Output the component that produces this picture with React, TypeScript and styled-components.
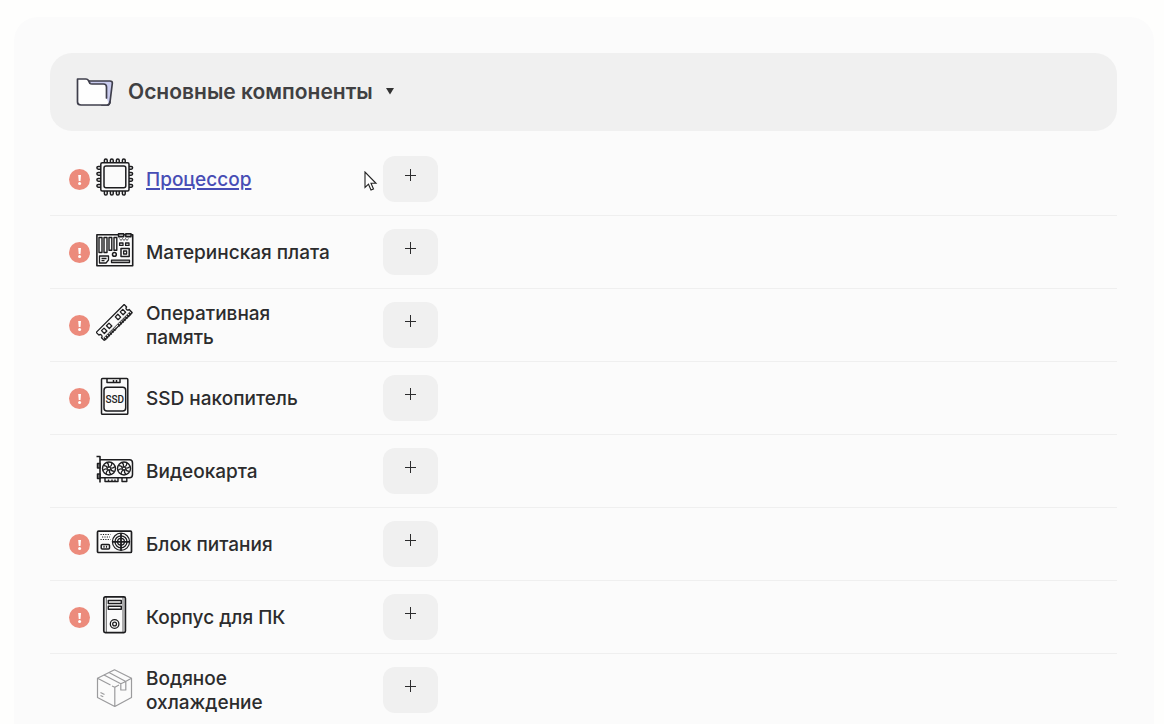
import React from "react";
import styled, { createGlobalStyle } from "styled-components";

const GlobalStyle = createGlobalStyle`
  *, *::before, *::after { box-sizing: border-box; }
  body {
    margin: 0;
    background: #fefefd;
    color: #2c2c2d;
    font-family: Inter, "Noto Sans", sans-serif;
  }
`;

const Page = styled.main`
  padding: 17px 10px 0 14px;
  min-height: 100vh;
  display: flex;
`;

const Card = styled.section`
  flex: 1;
  min-width: 0;
  padding: 36px 37px 36px 36px;
  border-radius: 24px;
  background: #fbfbfb;
`;

const Heading = styled.h2`
  margin: 0 0 12px;
`;

const GroupToggle = styled.button`
  display: flex;
  align-items: center;
  width: 100%;
  height: 78px;
  padding: 0 26px;
  border: 0;
  border-radius: 22px;
  background: #f0f0f0;
  color: #404042;
  font: 600 21px/28px Inter, "Noto Sans", sans-serif;
  text-align: left;
  cursor: pointer;
`;

const GroupTitle = styled.span`
  margin: 0 12px 0 14px;
`;

const List = styled.ul`
  margin: 0;
  padding: 0;
  list-style: none;
`;

const Row = styled.li`
  position: relative;
  display: flex;
  align-items: center;
  height: 73px;
  padding-left: 19px;
  border-bottom: 1px solid #efefef;
`;

const AlertSlot = styled.span`
  flex: none;
  width: 21px;
  height: 21px;
  margin-right: 6px;
  margin-top: 1px;
  svg { display: block; }
`;

const IconSlot = styled.span`
  flex: none;
  width: 38px;
  height: 38px;
  margin-right: 12px;
  margin-bottom: 4px;
  svg { display: block; }
`;

const Label = styled.span`
  flex: none;
  width: 195px;
  margin-right: 42px;
  margin-top: 2px;
  font-size: 19px;
  font-weight: 500;
  line-height: 24px;
`;

const PartLink = styled.a`
  color: #474db5;
  text-decoration: underline;
  text-decoration-thickness: 2px;
  text-underline-offset: 2px;
`;

const AddButton = styled.button`
  flex: none;
  display: flex;
  justify-content: center;
  align-items: center;
  width: 55px;
  height: 46px;
  padding: 0 0 8px;
  border: 0;
  border-radius: 12px;
  background: #f0f0f0;
  color: #2c2c2d;
  cursor: pointer;
`;

const Pointer = styled.svg`
  position: absolute;
  left: 314px;
  top: 28px;
  pointer-events: none;
`;

const IconBase = styled.svg.attrs({ width: 38, height: 38, viewBox: "0 0 38 38", "aria-hidden": true })`
  fill: none;
  stroke: #1d1d1f;
  stroke-width: 1.5;
  stroke-linejoin: round;
`;

const ChipText = styled.text`
  fill: #1d1d1f;
  stroke: none;
  font-family: Roboto, "Liberation Sans", sans-serif;
  font-size: 10px;
  font-weight: 500;
  text-anchor: middle;
`;

const FolderIcon = () => (
  <svg width="38" height="30" viewBox="0 0 38 30" fill="none" stroke="#3f3f4c" strokeWidth="1.7" strokeLinejoin="round" strokeLinecap="round" aria-hidden="true">
    <path d="M12 4H34Q36.600 4 36.300 6.500L34 25Q33.500 28 31 28H26Z" fill="#c9cbee" />
    <path d="M1.500 2H10Q11.500 2 12.500 3.500L14 6.500Q14.500 7 16 7H27.500Q30.500 7 30.500 10V21L33 27Q32 28 30 28H5Q1.500 28 1.500 25Z" fill="#fefefe" stroke="none" />
    <path d="M30.500 21V10Q30.500 7 27.500 7H16Q14.500 7 14 6.500L12.500 3.500Q11.500 2 10 2H1.500V25Q1.500 28 5 28H31Q33.500 28 34 25" />
  </svg>
);

const AlertIcon = () => (
  <svg width="21" height="21" viewBox="0 0 21 21" role="img" aria-label="!">
    <circle cx="10.500" cy="10.500" r="10.500" fill="#ec8b7c" />
    <path d="M9.200 6h2.800l-.5 6h-1.800z" fill="#fff" />
    <circle cx="10.600" cy="14.500" r="1.500" fill="#fff" />
  </svg>
);

const PlusIcon = () => (
  <svg width="12" height="12" viewBox="0 0 12 12" stroke="currentColor" strokeWidth="1" aria-hidden="true">
    <path d="M5.500 0V12M0 6.500H11" />
  </svg>
);

const CpuIcon = () => (
  <IconBase>
    <path d="M8.400 5V2.300a1.400 1.400 0 0 1 2.800 0V5M14.400 5V2.300a1.400 1.400 0 0 1 2.800 0V5M20.400 5V2.300a1.400 1.400 0 0 1 2.800 0V5M26.400 5V2.300a1.400 1.400 0 0 1 2.800 0V5" />
    <path d="M8.400 33v2.700a1.400 1.400 0 0 0 2.800 0V33M14.400 33v2.700a1.400 1.400 0 0 0 2.800 0V33M20.400 33v2.700a1.400 1.400 0 0 0 2.800 0V33M26.400 33v2.700a1.400 1.400 0 0 0 2.800 0V33" />
    <path d="M5 8.400H2.300a1.400 1.400 0 0 0 0 2.800H5M5 14.400H2.300a1.400 1.400 0 0 0 0 2.800H5M5 20.400H2.300a1.400 1.400 0 0 0 0 2.800H5M5 26.400H2.300a1.400 1.400 0 0 0 0 2.800H5" />
    <path d="M33 8.400h2.200a1.400 1.400 0 0 1 0 2.800H33M33 14.400h2.200a1.400 1.400 0 0 1 0 2.800H33M33 20.400h2.200a1.400 1.400 0 0 1 0 2.800H33M33 26.400h2.200a1.400 1.400 0 0 1 0 2.800H33" />
    <rect x="4.800" y="4.800" width="28.200" height="28.200" rx="1.500" />
    <rect x="8" y="8" width="21.800" height="21.800" rx="2" />
  </IconBase>
);

const BoardIcon = () => (
  <IconBase>
    <rect x="0.900" y="3.800" width="35.800" height="31" strokeWidth="1.600" />
    <path d="M3 6.500h3v15H3zM8 6.500h3v15H8zM13 6.500h2.800v12.800H13zM18 6.500h2.800v12.800H18z" strokeWidth="1.400" />
    <rect x="22.500" y="2.700" width="5.200" height="3" fill="#aaa" />
    <rect x="29.800" y="2.700" width="5.200" height="3" fill="#aaa" />
    <path d="M23.500 7.500l1.500 2 1.500-2 1.500 2 1.500-2 1.500 2 1.500-2" strokeWidth="0.700" />
    <rect x="23.600" y="12" width="3.400" height="2.400" strokeWidth="1.300" />
    <rect x="29.600" y="12" width="3.400" height="2.400" strokeWidth="1.300" />
    <rect x="25" y="17.500" width="8.200" height="8" />
    <rect x="27.600" y="20" width="3" height="3" strokeWidth="1.300" />
    <circle cx="18.400" cy="23.400" r="1.900" />
    <path d="M3.500 25h9v4l-2.500 3H3.500zM5.500 27.500h5M5.500 29.700h3" strokeWidth="1.300" />
    <rect x="15.500" y="29.200" width="18" height="2.400" fill="#aaa" strokeWidth="1.300" />
  </IconBase>
);

const RamIcon = () => (
  <IconBase>
    <g transform="rotate(-45 18.800 19)">
      <path d="M-1 12.500H38.500V16a1.800 1.800 0 0 0 0 3.600V23.800H-1V20a1.800 1.800 0 0 0 0-3.600z" strokeWidth="1.300" />
      <path d="M4 15h3.600v4H4zM11 15h3.600v4H11zM23.500 15h3.600v4h-3.600zM30.500 15h3.600v4h-3.600z" strokeWidth="1.300" />
      <path d="M0 21.800H38" strokeWidth="0.800" />
      <path d="M0 23.500H16M19.500 23.500H38" strokeWidth="2.800" strokeDasharray="1.500 1.100" />
    </g>
  </IconBase>
);

const SsdIcon = () => (
  <IconBase>
    <rect x="5.500" y="1.500" width="26.300" height="35.800" rx="1" />
    <path d="M11 1.500v4h13v-4M17.500 5v-2M20.500 5v-2" />
    <rect x="8" y="10.200" width="21.700" height="23.800" rx="3" />
    <ChipText x="18.700" y="25.500">SSD</ChipText>
  </IconBase>
);

const FanBlades = ({ cx, cy }: { cx: number; cy: number }) => (
  <g transform={`translate(${cx} ${cy})`}>
    <circle r="6.500" strokeWidth="1.400" />
    {[0, 45, 90, 135, 180, 225, 270, 315].map((a) => (
      <path key={a} d="M0 -1.500Q3 -2.200 2.800 -5.600" strokeWidth="1.200" transform={`rotate(${a})`} />
    ))}
    <circle r="1.500" strokeWidth="1" />
  </g>
);

const GpuIcon = () => (
  <IconBase>
    <path d="M0.500 6.500H4V32.500" strokeWidth="1.600" />
    <rect x="1.500" y="13.500" width="2.500" height="4.500" fill="#888" />
    <rect x="1.500" y="24" width="2.500" height="4.500" fill="#888" />
    <path d="M4 9.800H33.500Q36.500 9.800 36.500 13V24.500Q36.500 27.800 33.500 27.800H4" />
    <FanBlades cx={13} cy={18.500} />
    <FanBlades cx={28} cy={18.500} />
    <path d="M9 28v3.500h13V28M26 28v3.500h4.800V28M12.500 29.500v2M16 29.500v2M19 29.500v2" strokeWidth="1.400" />
  </IconBase>
);

const PsuIcon = () => (
  <IconBase>
    <rect x="1.500" y="8.200" width="34" height="21.300" rx="1" strokeWidth="1.700" />
    <path d="M4.500 11.500h10M6 14h8M4.500 16.500h10" strokeDasharray="1.200 1.200" strokeWidth="1.200" />
    <rect x="5.200" y="21.500" width="8.300" height="4.600" rx="1" />
    <path d="M8 22.800v2M10.500 22.800v2" strokeWidth="1.200" />
    <circle cx="25" cy="18.800" r="8.600" strokeWidth="1.200" />
    <circle cx="25" cy="18.800" r="6" strokeWidth="1.300" />
    <circle cx="25" cy="18.800" r="3.400" strokeWidth="1.300" />
    <path d="M25 10v17.600M16.200 18.800h17.600" strokeWidth="1.800" />
  </IconBase>
);

const CaseIcon = () => (
  <IconBase>
    <rect x="7.800" y="0.900" width="21.600" height="35.700" rx="1.500" strokeWidth="1.700" />
    <path d="M10.300 1v35.500M27 1v35.500" strokeWidth="0.700" />
    <path d="M12.300 4.500h13v3h-13zM12.300 10.300h13v3h-13z" strokeWidth="1.400" />
    <circle cx="18.600" cy="28" r="4.300" strokeWidth="1.300" />
    <circle cx="18.600" cy="28" r="1.900" strokeWidth="1.300" />
  </IconBase>
);

const BoxIcon = () => (
  <IconBase>
    <g stroke="#9b9b9d" strokeWidth="1.200">
      <path d="M18.500 0.800L35.500 9.300V28.500L18.800 37.500L1.500 28.500V9.300zM18.800 37.500V18.200" />
      <path d="M1.500 9.300l13 6.700M16 17l2.800 1.200L23 16M30 12.300l5.500-3" />
      <path d="M13 3.500L29.800 12.500V21h-5V14.800L8 6M24.800 14.800l5-2.300" />
      <path d="M4.500 23.500l4 2M4.500 26.500l2.800 1.300" />
    </g>
  </IconBase>
);

type Part = { name: string; Icon: React.ComponentType; required?: boolean; active?: boolean };

const parts: Part[] = [
  { name: "Процессор", Icon: CpuIcon, required: true, active: true },
  { name: "Материнская плата", Icon: BoardIcon, required: true },
  { name: "Оперативная память", Icon: RamIcon, required: true },
  { name: "SSD накопитель", Icon: SsdIcon, required: true },
  { name: "Видеокарта", Icon: GpuIcon },
  { name: "Блок питания", Icon: PsuIcon, required: true },
  { name: "Корпус для ПК", Icon: CaseIcon, required: true },
  { name: "Водяное охлаждение", Icon: BoxIcon },
];

export default function App() {
  return (
    <>
      <GlobalStyle />
      <Page>
        <Card>
          <Heading>
            <GroupToggle type="button" aria-expanded="true">
              <FolderIcon />
              <GroupTitle>Основные компоненты</GroupTitle>
              <svg width="10" height="10" viewBox="0 0 10 10" fill="#333" aria-hidden="true">
                <path d="M1 1h8L5 7.500z" />
              </svg>
            </GroupToggle>
          </Heading>
          <List>
            {parts.map(({ name, Icon, required, active }) => (
              <Row key={name}>
                <AlertSlot>{required && <AlertIcon />}</AlertSlot>
                <IconSlot><Icon /></IconSlot>
                <Label>{active ? <PartLink href="#cpu">{name}</PartLink> : name}</Label>
                <AddButton type="button" aria-label={name}><PlusIcon /></AddButton>
                {active && (
                  <Pointer width="14" height="20" viewBox="0 0 14 20" aria-hidden="true">
                    <path d="M1 1V16.500L4.500 13.200L7 19L9.500 18L7 12.300H12z" fill="#fff" stroke="#222" strokeWidth="1.100" />
                  </Pointer>
                )}
              </Row>
            ))}
          </List>
        </Card>
      </Page>
    </>
  );
}
